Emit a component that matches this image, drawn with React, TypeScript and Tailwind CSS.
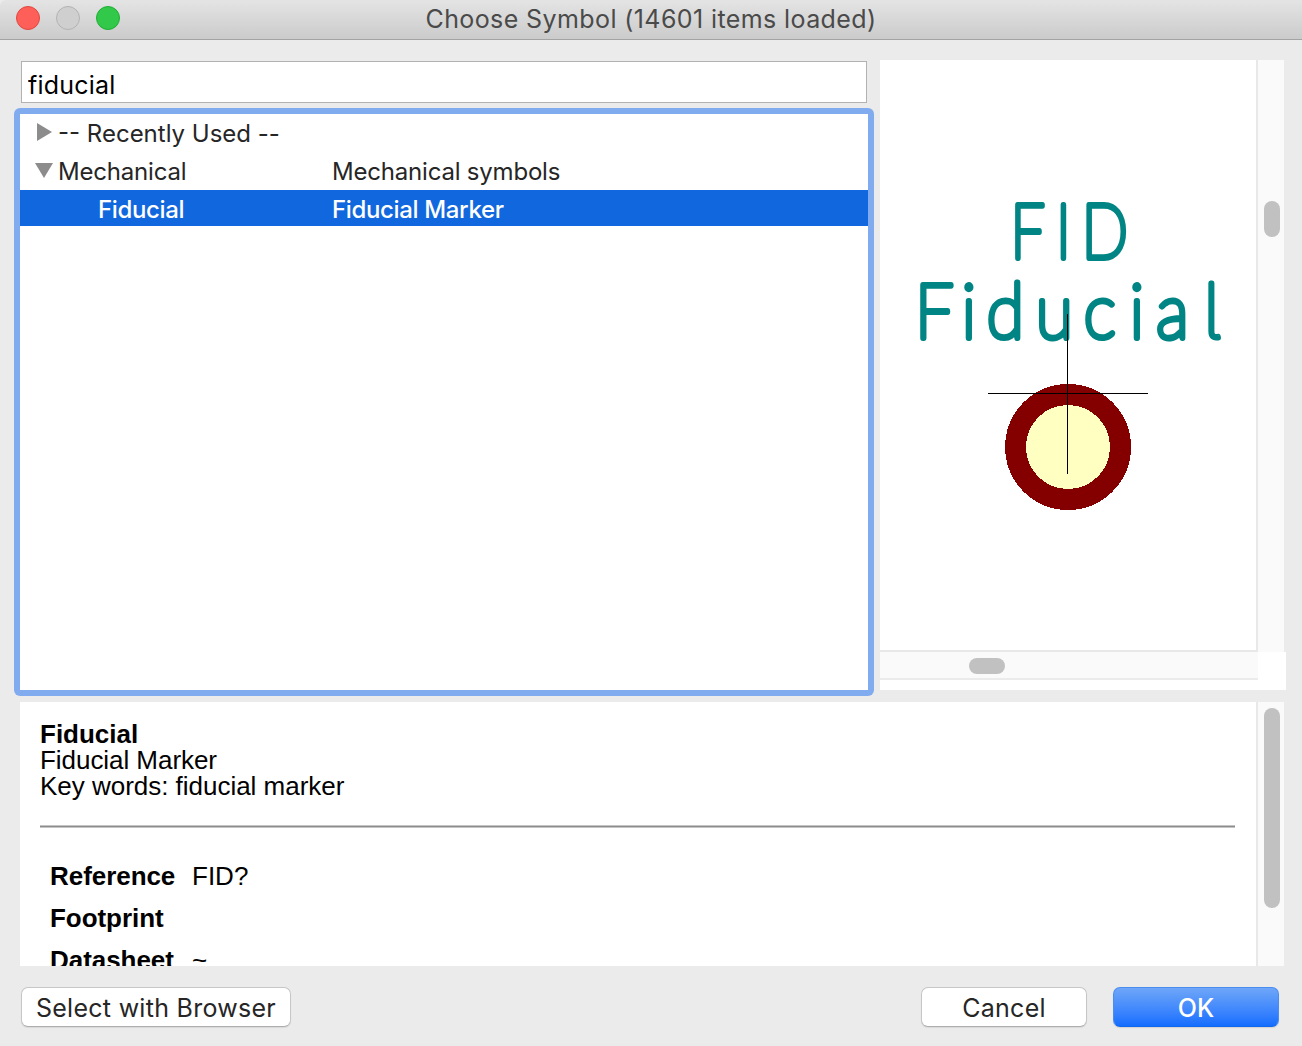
import type { ReactNode } from "react";

const ui = "font-['Inter',sans-serif]";
const html = "font-['Liberation_Sans',sans-serif]";

function TitleBar() {
  return (
    <header className="grid h-10 shrink-0 grid-cols-[1fr_auto_1fr] items-center rounded-tl-[6px] border-b border-[#a3a3a3] bg-linear-to-b from-[#e4e4e4] to-[#cbcbcb] px-4">
      <div className="-mt-[3px] flex gap-4">
        <span className="size-6 rounded-full border border-[#e2463f] bg-[#fe6059]" />
        <span className="size-6 rounded-full border border-[#b3b3b3] bg-[#cfcfcf]" />
        <span className="size-6 rounded-full border border-[#1fae34] bg-[#32c84a]" />
      </div>
      <h1 className="-mt-[1px] text-[25px] leading-9 tracking-[0.4px] whitespace-nowrap text-[#4a4a4a]">
        Choose Symbol (14601 items loaded)
      </h1>
      <div />
    </header>
  );
}

function TreeRow({
  arrow,
  name,
  description,
  selected = false,
}: {
  arrow?: ReactNode;
  name: string;
  description?: string;
  selected?: boolean;
}) {
  return (
    <div
      className={
        selected
          ? "flex h-9 items-center bg-[#1167dd] pt-1 font-medium tracking-[-0.35px] text-white"
          : description
            ? "flex h-[38px] items-center pt-0.5 tracking-[-0.2px] text-[#262626]"
            : "flex h-[38px] items-center pt-0.5 text-[#262626]"
      }
    >
      <div className="flex w-[312px] shrink-0 items-center">
        <div className={selected ? "w-[78px]" : "w-[38px] pl-[15px]"}>{arrow}</div>
        <span className="text-[24px] leading-8 whitespace-nowrap">{name}</span>
      </div>
      <span className="text-[24px] leading-8 whitespace-nowrap">{description}</span>
    </div>
  );
}

function SymbolTree() {
  return (
    <div className="h-[588px] w-[860px] rounded-[6px] bg-[#80abef] p-1.5">
      <div className="h-full bg-white">
        <TreeRow
          name="-- Recently Used --"
          arrow={
            <svg className="-mt-1 block" width="18" height="18" viewBox="0 0 18 18">
              <path d="M2 0 L17 9 L2 18Z" fill="#8c8c8c" />
            </svg>
          }
        />
        <TreeRow
          name="Mechanical"
          description="Mechanical symbols"
          arrow={
            <svg className="-mt-[3px] block" width="18" height="15" viewBox="0 0 18 15">
              <path d="M0 0 H18 L9 15Z" fill="#8c8c8c" />
            </svg>
          }
        />
        <TreeRow selected name="Fiducial" description="Fiducial Marker" />
      </div>
    </div>
  );
}

function Preview() {
  return (
    <div className="grid h-[630px] w-[406px] grid-cols-[376px_2px_26px_2px] grid-rows-[590px_2px_26px_12px] bg-white">
      <svg width="376" height="590" viewBox="880 60 376 590">
        <g
          fill="#008484"
          stroke="#008484"
          strokeWidth="6"
          strokeLinejoin="round"
          fontFamily="Lato, sans-serif"
          fontWeight="100"
          fontSize="76"
        >
          <text transform="translate(1010.5 258) scale(0.8 1)" x="0 57 89">FID</text>
          <text transform="translate(915 338) scale(0.9 1)" x="0 52 79.7 134.3 187.5 238.5 268">
            Fiducia
            <tspan
              x="321"
              fontFamily="Inter, sans-serif"
              strokeWidth="5"
              style={{ fontFeatureSettings: '"cv05"' }}
            >
              l
            </tspan>
          </text>
        </g>
        <circle cx="1068" cy="447" r="52.5" fill="#ffffc2" stroke="#840000" strokeWidth="21" shapeRendering="crispEdges" />
        <path d="M988 393.5H1148M1067.5 314V474" stroke="#000" shapeRendering="crispEdges" />
      </svg>
      <div className="row-span-2 bg-[#e8e8e8]" />
      <div className="row-span-2 bg-[#fafafa] px-1.5 pt-[141px]">
        <div className="h-9 w-4 rounded-full bg-[#c1c1c1]" />
      </div>
      <div className="row-span-2 bg-[#ebebeb]" />
      <div className="bg-[#e8e8e8]" />
      <div className="col-span-2 bg-[#fafafa] pt-1.5 pl-[89px]">
        <div className="h-4 w-9 rounded-full bg-[#c1c1c1]" />
      </div>
      <div className="col-span-2" />
      <div className="col-span-2 h-0.5 bg-[#ebebeb]" />
    </div>
  );
}

function Field({ name, value }: { name: string; value?: string }) {
  return (
    <div className="flex h-[42px] items-center">
      <dt className="w-[142px] font-bold tracking-[-0.05px]">{name}</dt>
      <dd>{value}</dd>
    </div>
  );
}

function Details() {
  return (
    <section className="mt-1.5 ml-5 flex h-[264px] w-[1264px] overflow-hidden bg-white">
      <div className={`${html} w-[1236px] px-5 pt-[19px] text-[26px] leading-[26px] text-black`}>
        <p className="font-bold">Fiducial</p>
        <p className="tracking-[-0.05px]">Fiducial Marker</p>
        <p className="tracking-[-0.02px]">Key words: fiducial marker</p>
        <hr className="mt-[26px] h-[3px] w-[1195px] border-y border-[#c4c4c4] bg-[#8c8c8c]" />
        <dl className="mt-[27px] pl-2.5">
          <Field name="Reference" value="FID?" />
          <Field name="Footprint" />
          <Field name="Datasheet" value="~" />
        </dl>
      </div>
      <div className="w-0.5 bg-[#e8e8e8]" />
      <div className="w-[26px] bg-[#fafafa] px-1.5 pt-1.5">
        <div className="h-[200px] w-4 rounded-full bg-[#c1c1c1]" />
      </div>
    </section>
  );
}

const plainButton =
  "h-10 rounded-[7px] border border-[#c6c6c6] border-b-[#aeaeae] bg-white pt-0.5 text-[25px] leading-9 tracking-[0.28px] whitespace-nowrap text-[#262626] shadow-[0_1px_1px_rgba(0,0,0,0.08)]";

export default function App() {
  return (
    <main className={`${ui} flex h-[1046px] w-[1302px] flex-col overflow-hidden bg-[#ebebeb]`}>
      <TitleBar />
      <div className="mt-5 flex gap-1.5 pl-3.5">
        <div>
          <input
            className="mt-px mb-[5px] ml-[7px] block h-[42px] w-[846px] border border-[#b2b2b2] bg-white px-1.5 pt-1.5 text-[25px] tracking-[0.2px] text-black outline-none"
            defaultValue="fiducial"
          />
          <SymbolTree />
        </div>
        <Preview />
      </div>
      <Details />
      <footer className="mt-[21px] flex pr-[23px] pl-[21px]">
        <button className={`${plainButton} w-[270px]`}>Select with Browser</button>
        <button className={`${plainButton} ml-auto w-[166px]`}>Cancel</button>
        <button className="ml-[26px] h-10 w-[166px] rounded-[7px] border border-[#4a8cf0] border-b-[#1267ee] bg-linear-to-b from-[#6ea6f8] to-[#146dff] pt-0.5 text-[25px] leading-9 font-medium text-white shadow-[0_1px_1px_rgba(0,0,0,0.1)]">
          OK
        </button>
      </footer>
    </main>
  );
}
